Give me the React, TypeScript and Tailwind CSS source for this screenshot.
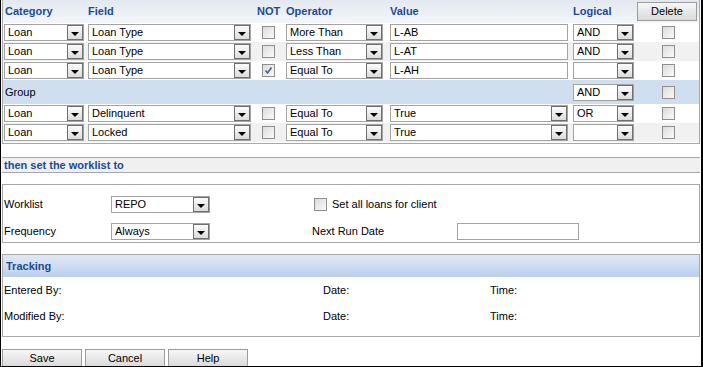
import React from "react";

const F = "font-['Liberation_Sans',Arial,sans-serif]";

function Arrow() {
  return (
    <div className="w-[16px] h-full border border-[#6f6f6f] bg-gradient-to-b from-[#fbfbfb] to-[#dcdcdc] flex items-end justify-center pb-[3px] shrink-0">
      <div className="w-0 h-0 border-l-[4px] border-r-[4px] border-t-[4px] border-l-transparent border-r-transparent border-t-black" />
    </div>
  );
}

function Select({ w, value, cls = "" }: { w: string; value: string; cls?: string }) {
  return (
    <div className={`${w} h-[17px] flex border border-[#a3a3a3] bg-white shrink-0 ${cls}`}>
      <div className="flex-1 pl-[3px] text-[11px] leading-[15px] text-black whitespace-nowrap overflow-hidden">{value}</div>
      <Arrow />
    </div>
  );
}

function Input({ w, value = "", cls = "" }: { w: string; value?: string; cls?: string }) {
  return (
    <div className={`${w} h-[17px] border border-[#a3a3a3] bg-white pl-[3px] text-[11px] leading-[15px] shrink-0 ${cls}`}>{value}</div>
  );
}

function Check({ checked = false }: { checked?: boolean }) {
  return (
    <div className="w-[13px] h-[13px] border border-[#8f8f8f] bg-gradient-to-br from-[#dcdcdc] to-[#fafafa] flex items-center justify-center">
      {checked && (
        <svg width="9" height="9" viewBox="0 0 9 9">
          <path d="M1.5 4.5 L3.5 7 L7.5 1.5" stroke="#4b5d99" strokeWidth="1.6" fill="none" />
        </svg>
      )}
    </div>
  );
}

type Row = { cat: string; field: string; not: boolean; op: string; value: string; valueSelect?: boolean; logical: string; bg: string };

const rows: Row[] = [
  { cat: "Loan", field: "Loan Type", not: false, op: "More Than", value: "L-AB", logical: "AND", bg: "bg-white" },
  { cat: "Loan", field: "Loan Type", not: false, op: "Less Than", value: "L-AT", logical: "AND", bg: "bg-[#f1f1f1]" },
  { cat: "Loan", field: "Loan Type", not: true, op: "Equal To", value: "L-AH", logical: "", bg: "bg-white" },
];
const rows2: Row[] = [
  { cat: "Loan", field: "Delinquent", not: false, op: "Equal To", value: "True", valueSelect: true, logical: "OR", bg: "bg-white" },
  { cat: "Loan", field: "Locked", not: false, op: "Equal To", value: "True", valueSelect: true, logical: "", bg: "bg-[#f1f1f1]" },
];

function RuleRow({ r }: { r: Row }) {
  return (
    <div className={`h-[19px] flex items-center pl-[1px] ${r.bg}`}>
      <Select w="w-[80px]" value={r.cat} />
      <Select w="w-[163px]" value={r.field} cls="ml-[4px]" />
      <div className="w-[35px] flex justify-center"><Check checked={r.not} /></div>
      <Select w="w-[97px]" value={r.op} />
      {r.valueSelect ? (
        <Select w="w-[178px]" value={r.value} cls="ml-[7px]" />
      ) : (
        <Input w="w-[178px]" value={r.value} cls="ml-[7px]" />
      )}
      <Select w="w-[61px]" value={r.logical} cls="ml-[5px]" />
      <div className="w-[60px] ml-[4px] flex justify-center"><Check /></div>
    </div>
  );
}

function Btn({ label, w }: { label: string; w: string }) {
  return (
    <div className={`${w} h-[19px] border border-[#9c9c9c] bg-gradient-to-b from-[#f7f7f7] to-[#d9d9d9] text-[11px] text-black flex items-center justify-center`}>{label}</div>
  );
}

export default function App() {
  const hdr = "text-[11px] font-bold text-[#1c4a96]";
  return (
    <div className={`${F} w-[703px] h-[367px] overflow-hidden bg-white border-l border-r-2 border-b border-black text-[11px] text-black`}>
      {/* Rules panel */}
      <div className="border border-t-0 border-[#a8a8a8] ml-[1px] mr-[1px] h-[144px]">
        <div className="h-[23px] flex items-center bg-gradient-to-b from-[#e3e8f0] to-[#f3f5f9] pl-[1px]">
          <div className={`${hdr} w-[84px] pl-[1px]`}>Category</div>
          <div className={`${hdr} w-[163px]`}>Field</div>
          <div className={`${hdr} w-[35px] pl-[6px]`}>NOT</div>
          <div className={`${hdr} w-[104px]`}>Operator</div>
          <div className={`${hdr} w-[183px]`}>Value</div>
          <div className={`${hdr} w-[64px]`}>Logical</div>
          <Btn label="Delete" w="w-[60px]" />
        </div>
        {rows.map((r, i) => <RuleRow key={i} r={r} />)}
        <div className="h-[24px] flex items-center bg-[#d0dff0] pl-[1px]">
          <div className="w-[569px] pl-[1px] text-[11px]">Group</div>
          <Select w="w-[61px]" value="AND" />
          <div className="w-[60px] ml-[4px] flex justify-center"><Check /></div>
        </div>
        {rows2.map((r, i) => <RuleRow key={i} r={r} />)}
      </div>

      {/* then set */}
      <div className="mt-[13px] mx-[1px] h-[16px] border-y border-[#a8a8a8] bg-[#f0f0f0] flex items-center pl-[2px]">
        <span className={hdr}>then set the worklist to</span>
      </div>

      <div className="mt-[11px] mx-[1px] h-[59px] border border-[#a8a8a8] pl-[1px] pt-[10px]">
        <div className="flex items-center h-[18px]">
          <div className="w-[107px]">Worklist</div>
          <Select w="w-[99px]" value="REPO" />
          <div className="ml-[104px] flex items-center">
            <Check />
            <span className="ml-[5px]">Set all loans for client</span>
          </div>
        </div>
        <div className="flex items-center h-[18px] mt-[9px]">
          <div className="w-[107px]">Frequency</div>
          <Select w="w-[99px]" value="Always" />
          <div className="w-[247px] pl-[102px] whitespace-nowrap">Next Run Date</div>
          <Input w="w-[122px]" />
        </div>
      </div>

      {/* Tracking */}
      <div className="mt-[11px] mx-[1px] h-[83px] border border-[#a8a8a8]">
        <div className="h-[22px] bg-gradient-to-b from-[#dfe8f6] via-[#cfddf2] to-[#b9cfee] flex items-center pl-[3px]">
          <span className={hdr}>Tracking</span>
        </div>
        <div className="flex items-center h-[24px] mt-[1px] pl-[1px]">
          <div className="w-[319px]">Entered By:</div>
          <div className="w-[167px]">Date:</div>
          <div>Time:</div>
        </div>
        <div className="flex items-center h-[24px] mt-[2px] pl-[1px]">
          <div className="w-[319px]">Modified By:</div>
          <div className="w-[167px]">Date:</div>
          <div>Time:</div>
        </div>
      </div>

      <div className="mt-[12px] flex gap-[3px] ml-[1px]">
        <Btn label="Save" w="w-[80px]" />
        <Btn label="Cancel" w="w-[80px]" />
        <Btn label="Help" w="w-[80px]" />
      </div>
    </div>
  );
}
